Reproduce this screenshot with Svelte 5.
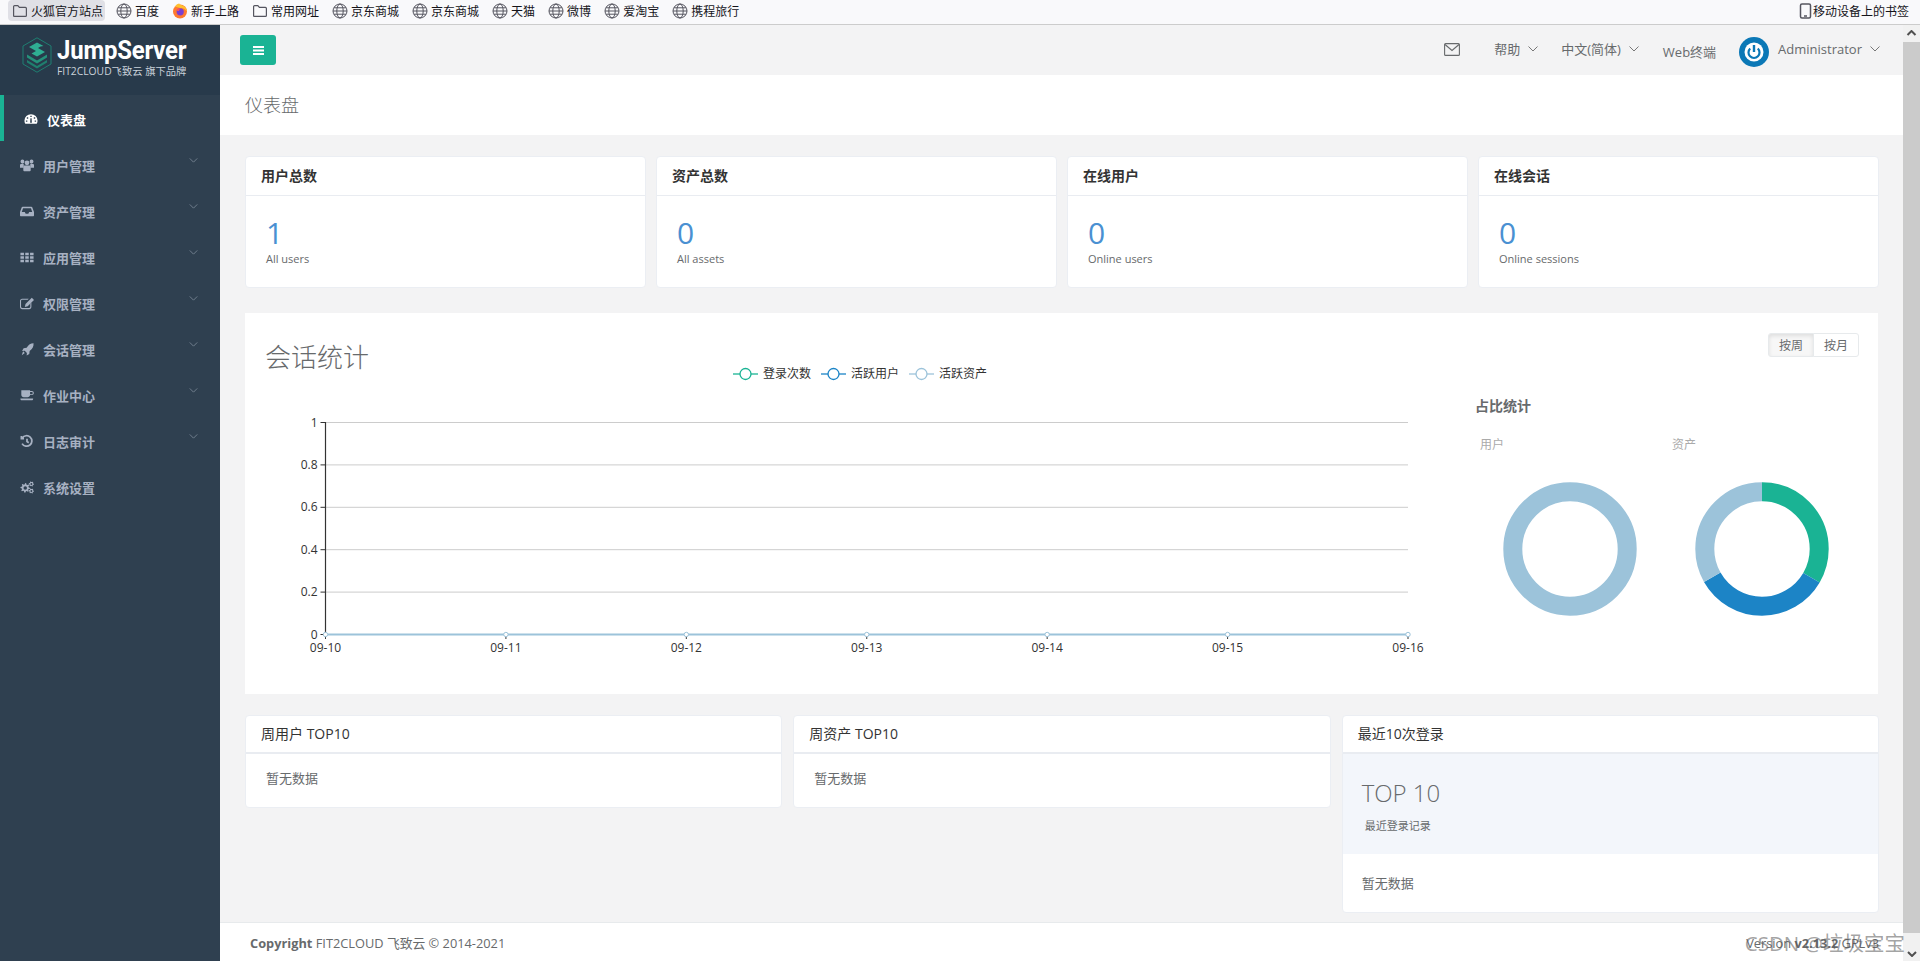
<script lang="ts">
	function gear(cx: number, cy: number, r: number, hole: number, teeth = 8) {
		let d = ''
		const step = (Math.PI * 2) / (teeth * 4)
		for (let i = 0; i < teeth * 4; i++) {
			const rad = i % 4 < 2 ? r : r * 0.72
			const x = cx + Math.cos(i * step) * rad
			const y = cy + Math.sin(i * step) * rad
			d += `${i ? 'L' : 'M'}${x.toFixed(2)} ${y.toFixed(2)}`
		}
		d += `zM${cx - hole} ${cy}a${hole} ${hole} 0 1 0 ${hole * 2} 0a${hole} ${hole} 0 1 0 ${-hole * 2} 0z`
		return d
	}

	const bookmarks = [
		{ icon: 'folder', label: '火狐官方站点', active: true },
		{ icon: 'globe', label: '百度' },
		{ icon: 'firefox', label: '新手上路' },
		{ icon: 'folder', label: '常用网址' },
		{ icon: 'globe', label: '京东商城' },
		{ icon: 'globe', label: '京东商城' },
		{ icon: 'globe', label: '天猫' },
		{ icon: 'globe', label: '微博' },
		{ icon: 'globe', label: '爱淘宝' },
		{ icon: 'globe', label: '携程旅行' }
	]

	const menu = [
		{
			label: '仪表盘',
			active: true,
			d: 'M8 2.5A7.5 7.5 0 0 0 .5 10c0 1.4.4 2.6 1 3.5h13c.6-.9 1-2.1 1-3.5A7.5 7.5 0 0 0 8 2.5zM7.2 4.2h1.6v1.6H7.2zM3.2 6h1.6v1.6H3.2zM11.2 6h1.6v1.6h-1.6zM2.2 9.6h1.6v1.6H2.2zM12.2 9.6h1.6v1.6h-1.6zM7 12.2l.3-5h1.4l.3 5z'
		},
		{
			label: '用户管理',
			arrow: true,
			d: 'M8 2.8a2.7 2.7 0 1 1 0 5.4 2.7 2.7 0 0 1 0-5.4zM2.8 1.800a2.2 2.2 0 1 1 0 4.400 2.2 2.2 0 0 1 0-4.400zM13.200 1.800a2.2 2.2 0 1 1 0 4.400 2.2 2.2 0 0 1 0-4.400zM0 7.500c.6-.6 1.600-.8 3-.8.6 0 1 .1 1.300.2l-.4 4.100H0zM16 7.500c-.6-.6-1.600-.8-3-.8-.6 0-1 .1-1.300.2l.4 4.100H16zM5 8.600h6c.8 0 1.200.6 1.200 1.400v4c0 .6-.4 1-1 1H4.800c-.6 0-1-.4-1-1v-4c0-.8.4-1.400 1.200-1.400z'
		},
		{
			label: '资产管理',
			arrow: true,
			d: 'M3 3h10c.5 0 .8.3 1 .7l2 5.3v3.8c0 .7-.5 1.2-1.2 1.2H1.2C.5 14 0 13.500 0 12.800V9l2-5.300c.2-.4.5-.7 1-.7zM3.500 4.800 2 9h3.500l1 2h3l1-2H14l-1.500-4.200z'
		},
		{
			label: '应用管理',
			arrow: true,
			d: 'M.5 3h4v3h-4zM6 3h4v3H6zM11.500 3h4v3h-4zM.5 7h4v3h-4zM6 7h4v3H6zM11.500 7h4v3h-4zM.5 11h4v3h-4zM6 11h4v3H6zM11.500 11h4v3h-4z'
		},
		{
			label: '权限管理',
			arrow: true,
			d: 'M2.500 3H10L8.800 4.200H2.500c-.7 0-1.300.6-1.300 1.300v6.800c0 .7.6 1.300 1.300 1.300h8c.7 0 1.300-.6 1.300-1.300V9l1.200-1.200v4.700c0 1.400-1.100 2.500-2.500 2.500h-8C1.100 15 0 13.900 0 12.500v-7C0 4.100 1.100 3 2.500 3zM13.500 2l2.500 2.500L8.800 11.700 5.500 12.500l.8-3.300z'
		},
		{
			label: '会话管理',
			arrow: true,
			d: 'M15.500 1.500c.2 3.500-1 6.500-4.500 8.800l-.4 3.500-3 1.700.3-3-2.500-2.500-3 .3L4.100 7l3.500-.4C9.900 3 12 1.700 15.500 1.500zM3.500 10.500l2 2L2 15z'
		},
		{
			label: '作业中心',
			arrow: true,
			d: 'M1.500 2.500h10v1h2c1.400 0 2.300 1 2.300 2.300s-.9 2.300-2.300 2.300h-2c-.3 1.500-1.300 2.400-2.800 2.400H4.300c-1.600 0-2.800-1.200-2.800-2.800zM11.500 4.700v2.300h2c.7 0 1.100-.5 1.100-1.200s-.4-1.100-1.100-1.100zM.5 12h14.500v.5c0 .8-.7 1.500-1.500 1.500H2c-.8 0-1.500-.7-1.500-1.500z'
		},
		{
			label: '日志审计',
			arrow: true,
			stroke: true,
			d: 'M2.600 4.600A6 6 0 1 1 2.400 11M1.600 2.400v3h3M8 5.500v3l2 1.400'
		},
		{
			label: '系统设置',
			d: gear(6, 9, 5.500, 2) + gear(13, 4.500, 3, 1.100, 6) + gear(13, 12.500, 3, 1.100, 6)
		}
	]

	const stats = [
		{ title: '用户总数', value: 1, note: 'All users' },
		{ title: '资产总数', value: 0, note: 'All assets' },
		{ title: '在线用户', value: 0, note: 'Online users' },
		{ title: '在线会话', value: 0, note: 'Online sessions' }
	]

	const legend = [
		{ label: '登录次数', color: '#1ab394' },
		{ label: '活跃用户', color: '#1c84c6' },
		{ label: '活跃资产', color: '#9cc3da' }
	]

	// chart coordinates are relative to the svg, whose origin sits under the panel header
	const left = 80.5
	const right = 1163
	const base = 234
	const yTicks = ['0', '0.2', '0.4', '0.6', '0.8', '1']
	const days = ['09-10', '09-11', '09-12', '09-13', '09-14', '09-15', '09-16']
	const rowH = 42.4
	const colW = (right - left) / 6

	const r = 57.200
	const circ = Math.PI * 2 * r
	const donuts = [
		{ label: '用户', parts: [{ color: '#9cc3da', share: 1 }] },
		{
			label: '资产',
			parts: [
				{ color: '#1ab394', share: 1 / 3 },
				{ color: '#1c84c6', share: 1 / 3 },
				{ color: '#9cc3da', share: 1 / 3 }
			]
		}
	]
</script>

{#snippet chevron()}
	<svg class="chevron" viewBox="0 0 10 6" width="10" height="6"><path d="M.5.5 5 5 9.500.5" /></svg>
{/snippet}

<div class="browser-bar">
	{#each bookmarks as item}
		<div class="bookmark" class:active={item.active}>
			{#if item.icon === 'folder'}
				<svg viewBox="0 0 16 16" width="16" height="16" fill="none" stroke="#55555f" stroke-width="1.200">
					<path d="M1.600 13.400V3.600c0-.6.400-1 1-1h3.200l1.600 1.800h6c.6 0 1 .4 1 1v7c0 .6-.4 1-1 1H2.600c-.6 0-1-.4-1-1z" />
				</svg>
			{:else if item.icon === 'globe'}
				<svg viewBox="0 0 16 16" width="16" height="16" fill="none" stroke="#55555f" stroke-width="1">
					<circle cx="8" cy="8" r="7" />
					<ellipse cx="8" cy="8" rx="3.200" ry="7" />
					<path d="M1 8h14M2 4.800h12M2 11.200h12" />
				</svg>
			{:else}
				<svg viewBox="0 0 16 16" width="16" height="16">
					<circle cx="8" cy="8.500" r="7" fill="#ff7a2e" />
					<path d="M3 3.500C4 1.500 6 .8 7.500.5 7 1.800 9.500 2 11.500 3c2 1.200 3.400 3.500 3.500 5.500-2-3-5-4-7-3.500z" fill="#ffc02e" />
					<circle cx="8.200" cy="8.800" r="3.600" fill="#7a3fd0" />
					<path d="M4.500 7c1-1.500 3-2 4.500-1.300C7.500 6 6.800 7 7.200 8 6 8.300 5 7.800 4.500 7z" fill="#ff4f5e" />
				</svg>
			{/if}
			<span>{item.label}</span>
		</div>
	{/each}
	<div class="mobile-bookmarks">
		<svg viewBox="0 0 13 16" width="13" height="16" fill="none" stroke="#55555f" stroke-width="1.500">
			<rect x="1.500" y="1" width="10" height="14" rx="1.500" />
			<path d="M5 13h3" />
		</svg>
		<span>移动设备上的书签</span>
	</div>
</div>

<div class="window">
	<aside class="sidebar">
		<div class="logo">
			<svg class="logo-mark" viewBox="0 0 30 36" width="30" height="36" fill="none">
				<path d="M15 .8 29 9v18l-14 8.200L1 27V9z" stroke="#1f7f72" stroke-width="1" />
				<path d="M21.500 9 15 5.500 7 10l7 4-4.500 2.500 5.500 3 8-4.500-7-4 2.500-1.500z" fill="#2fae93" />
				<path d="M5 17.500 15 23.500 25 17.500v3l-10 6-10-6z" fill="#25917b" />
				<path d="M5 23 15 29l10-6v2.500l-10 6-10-6z" fill="#1f7f6e" />
			</svg>
			<div class="logo-text">
				<div class="brand">JumpServer</div>
				<div class="tagline">FIT2CLOUD飞致云 旗下品牌</div>
			</div>
		</div>
		<nav>
			{#each menu as item}
				<div class="nav-item" class:active={item.active}>
					<svg
						class="nav-icon"
						class:stroked={item.stroke}
						viewBox="0 0 16 16"
						width="14"
						height="14"
					>
						<path d={item.d} fill-rule="evenodd" />
					</svg>
					<span>{item.label}</span>
					{#if item.arrow}
						<svg class="nav-arrow" viewBox="0 0 10 6" width="9" height="5"><path d="M.5.5 5 5 9.500.5" /></svg>
					{/if}
				</div>
			{/each}
		</nav>
	</aside>

	<main>
		<header class="topbar">
			<button class="menu-toggle" aria-label="menu">
				<svg viewBox="0 0 11 9" width="11" height="9"><path d="M0 0h11v2H0zM0 3.500h11v2H0zM0 7h11v2H0z" fill="#fff" /></svg>
			</button>
			<div class="top-links">
				<svg class="mail" viewBox="0 0 16 13" width="16" height="13" fill="none" stroke="#676a6c" stroke-width="1.100">
					<rect x=".6" y=".6" width="14.800" height="11.800" rx="1" />
					<path d="M1 1.500 8 7.500l7-6" />
				</svg>
				<span class="link help">帮助 {@render chevron()}</span>
				<span class="link lang">中文(简体) {@render chevron()}</span>
				<span class="link web">Web终端</span>
				<svg class="avatar" viewBox="0 0 30 30" width="30" height="30" fill="none">
					<circle cx="15" cy="15" r="15" fill="#0b78b6" />
					<circle cx="15" cy="15" r="9.500" fill="#fff" />
					<path d="M11.200 11.500a5.500 5.500 0 1 0 7.600 0" stroke="#0b78b6" stroke-width="2.200" />
					<path d="M15 8v7" stroke="#0b78b6" stroke-width="2.400" />
				</svg>
				<span class="link user">Administrator {@render chevron()}</span>
			</div>
		</header>

		<div class="page-heading">仪表盘</div>

		<div class="content">
			<section class="stats">
				{#each stats as stat}
					<div class="card">
						<h5>{stat.title}</h5>
						<div class="stat-body">
							<div class="stat-value">{stat.value}</div>
							<small>{stat.note}</small>
						</div>
					</div>
				{/each}
			</section>

			<section class="panel">
				<div class="panel-left">
					<div class="panel-head">
						<h2>会话统计</h2>
						<div class="legend">
							{#each legend as entry}
								<div class="legend-item">
									<svg viewBox="0 0 25 14" width="25" height="14" fill="none" stroke={entry.color}>
										<path d="M0 7h25" stroke-width="2" opacity="0.65" />
										<circle cx="12.500" cy="7" r="5.500" fill="#fff" stroke-width="1.300" />
									</svg>
									<span>{entry.label}</span>
								</div>
							{/each}
						</div>
					</div>
					<svg class="line-chart" viewBox="0 0 1195 294" width="1195" height="294">
						{#each yTicks as tick, i}
							{@const y = base - i * rowH + 0.500}
							{#if i > 0}
								<path d="M{left} {y}H{right}" stroke="#ccc" />
							{/if}
							<path d="M{left - 5} {y}H{left}" stroke="#333" />
							<text x={left - 8} y={y + 4} text-anchor="end">{tick}</text>
						{/each}
						<path d="M{left} {base - 5 * rowH}V{base}" stroke="#333" stroke-width="1.200" />
						{#each days as day, i}
							{@const x = left + i * colW}
							<path d="M{x} {base}v5" stroke="#333" />
							<text {x} y={base + 18} text-anchor="middle">{day}</text>
						{/each}
						<path d="M{left} {base + 0.500}H{right}" stroke="#9cc3da" stroke-width="2" />
						{#each days as day, i}
							<circle cx={left + i * colW} cy={base + 0.500} r="2.200" fill="#fff" stroke="#9cc3da" />
						{/each}
					</svg>
				</div>

				<div class="panel-right">
					<div class="switch">
						<button class="on">按周</button>
						<button>按月</button>
					</div>
					<h4>占比统计</h4>
					<div class="donuts">
						{#each donuts as donut}
							<div class="donut">
								<div class="donut-label">{donut.label}</div>
								<svg viewBox="0 0 140 140" width="140" height="140" fill="none">
									{#each donut.parts as part, i}
										<circle
											cx="70"
											cy="70"
											{r}
											stroke={part.color}
											stroke-width="19"
											stroke-dasharray="{part.share * circ} {circ}"
											stroke-dashoffset={-i * part.share * circ}
											transform="rotate(-90 70 70)"
										/>
									{/each}
								</svg>
							</div>
						{/each}
					</div>
				</div>
			</section>

			<section class="tops">
				<div class="card">
					<h5 class="plain">周用户 TOP10</h5>
					<div class="empty">暂无数据</div>
				</div>
				<div class="card">
					<h5 class="plain">周资产 TOP10</h5>
					<div class="empty">暂无数据</div>
				</div>
				<div class="card">
					<h5 class="plain">最近10次登录</h5>
					<div class="top-banner">
						<div class="top-title">TOP 10</div>
						<small>最近登录记录</small>
					</div>
					<div class="empty wide">暂无数据</div>
				</div>
			</section>
		</div>

		<footer>
			<div><strong>Copyright</strong> FIT2CLOUD 飞致云 © 2014-2021</div>
			<div>Version <strong>v2.13.2</strong> GPLv3</div>
		</footer>
	</main>

	<div class="scrollbar">
		<svg class="scroll-up" viewBox="0 0 10 6" width="10" height="6"><path d="M1 5 5 1l4 4" /></svg>
		<div class="thumb"></div>
		<div class="scroll-end">
			<svg viewBox="0 0 10 6" width="10" height="6"><path d="M1 1l4 4 4-4" /></svg>
		</div>
	</div>

	<div class="watermark">CSDN @垃圾宝宝</div>
</div>

<style>
	:global(*) {
		box-sizing: border-box;
	}

	:global(body) {
		background: #f3f3f4;
		overflow: hidden;
	}

	:global(#app) {
		color: #676a6c;
		font-family: 'Open Sans', 'Noto Sans CJK SC', sans-serif;
		font-size: 13px;
	}

	.browser-bar {
		align-items: center;
		background: #f9f9fb;
		border-bottom: 1px solid #ccc;
		color: #15141a;
		display: flex;
		font-size: 12px;
		height: 25px;
		padding: 0 0 3px 8px;
	}

	.bookmark {
		align-items: center;
		border-radius: 4px;
		display: flex;
		gap: 3px;
		height: 21px;
		margin-right: 7px;
		padding: 0 2px 0 4px;
	}

	.bookmark.active {
		background: #e0e0e6;
	}

	.mobile-bookmarks {
		align-items: center;
		display: flex;
		gap: 1px;
		margin-left: auto;
		margin-right: 11px;
	}

	.window {
		display: flex;
		height: 936px;
		position: relative;
	}

	.sidebar {
		background: #2f4050;
		flex: none;
		width: 220px;
	}

	.logo {
		align-items: flex-start;
		background: #283a4b;
		display: flex;
		gap: 5px;
		height: 70px;
		padding: 12px 0 0 22px;
	}

	.logo-text {
		color: #fff;
	}

	.brand {
		font-family: Roboto, sans-serif;
		font-size: 26px;
		font-weight: 700;
		letter-spacing: -0.2px;
		line-height: 26px;
		transform: scaleX(0.92);
		transform-origin: left;
	}

	.tagline {
		color: #c9d1d9;
		font-size: 10.3px;
		line-height: 14px;
		margin-top: 1px;
		white-space: nowrap;
	}

	.nav-item {
		align-items: center;
		color: #a7b1c2;
		display: flex;
		font-weight: 600;
		height: 46px;
		padding: 2px 0 0 20px;
		position: relative;
	}

	.nav-item.active {
		background: #2f4050;
		border-left: 4px solid #1ab394;
		color: #fff;
	}

	.nav-icon {
		fill: currentColor;
		flex: none;
		margin-right: 9px;
	}

	.nav-icon.stroked {
		fill: none;
		stroke: currentColor;
		stroke-width: 2;
	}

	.nav-arrow {
		fill: none;
		margin-left: auto;
		margin-right: 22px;
		margin-top: -10px;
		stroke: #7d8a99;
	}

	main {
		display: flex;
		flex: 1;
		flex-direction: column;
		min-width: 0;
	}

	.topbar {
		align-items: center;
		display: flex;
		flex: none;
		height: 50px;
		padding: 0 23px 0 20px;
	}

	.menu-toggle {
		align-items: center;
		background: #1ab394;
		border: 0;
		border-radius: 3px;
		display: flex;
		height: 30px;
		justify-content: center;
		padding: 0;
		width: 36px;
	}

	.top-links {
		align-items: center;
		display: flex;
		margin-left: auto;
	}

	.link {
		align-items: center;
		display: flex;
		gap: 6px;
		line-height: 18px;
		margin-top: -2px;
		white-space: nowrap;
	}

	.chevron {
		fill: none;
		margin-left: 2px;
		stroke: #777;
	}

	.mail {
		margin-right: 34px;
		margin-top: -2px;
	}

	.help {
		margin-right: 23px;
	}

	.lang {
		margin-right: 24px;
	}

	.web {
		margin-right: 23px;
		margin-top: 3px;
	}

	.avatar {
		margin-right: 9px;
		margin-top: 4px;
	}

	.page-heading {
		background: #fff;
		flex: none;
		font-size: 18px;
		font-weight: 300;
		height: 60px;
		line-height: 60px;
		padding-left: 25px;
	}

	.content {
		padding: 21px 24px 0 25px;
	}

	.stats {
		display: grid;
		gap: 10px;
		grid-template-columns: repeat(4, 1fr);
	}

	.card {
		background: #fff;
		border: 1px solid #ebeef3;
		border-radius: 4px;
	}

	.stats .card {
		height: 132px;
	}

	h5 {
		border-bottom: 1px solid #e9ecf1;
		color: #333;
		font-size: 14px;
		font-weight: 700;
		height: 39px;
		line-height: 37px;
		margin: 0;
		padding-left: 15px;
	}

	h5.plain {
		border-bottom-width: 2px;
		font-weight: 400;
		height: 38px;
		line-height: 36px;
	}

	.stat-body {
		padding: 20px 20px 0;
	}

	.stat-value {
		color: #4a90d2;
		font-size: 30px;
		font-weight: 400;
		line-height: 33px;
	}

	small {
		display: block;
		font-size: 11px;
		line-height: 16px;
	}

	.stat-body small {
		margin-top: 2px;
	}

	.panel {
		background: #fff;
		display: flex;
		height: 381px;
		margin: 25px 1px 0 0;
	}

	.panel-left {
		flex: none;
		width: 1195px;
	}

	.panel-head {
		display: flex;
		height: 87px;
		padding: 27px 0 0 20px;
	}

	h2 {
		font-size: 26px;
		font-weight: 300;
		line-height: 34px;
		margin: 0;
		width: 104px;
	}

	.legend {
		color: #333;
		display: flex;
		font-size: 12px;
		gap: 10px;
		height: 16px;
		line-height: 16px;
		margin: 26px 0 0 364px;
	}

	.legend-item {
		align-items: center;
		display: flex;
		gap: 5px;
	}

	.line-chart {
		display: block;
	}

	.line-chart text {
		fill: #333;
		font-size: 12px;
	}

	.panel-right {
		flex: 1;
		padding: 20px 23px 0 35px;
	}

	.switch {
		display: flex;
		justify-content: flex-end;
	}

	.switch button {
		background: #fff;
		border: 1px solid #e7eaec;
		color: #676a6c;
		font: inherit;
		font-size: 12px;
		height: 24px;
		margin-left: -1px;
		padding: 0;
		width: 46px;
	}

	.switch button:first-child {
		border-radius: 3px 0 0 3px;
	}

	.switch button:last-child {
		border-radius: 0 3px 3px 0;
	}

	.switch .on {
		background: #f7f7f7;
		box-shadow: inset 0 2px 4px rgba(0, 0, 0, 0.1);
	}

	h4 {
		font-size: 14px;
		font-weight: 700;
		line-height: 20px;
		margin: 39px 0 0;
	}

	.donuts {
		display: flex;
		margin-top: 21px;
	}

	.donut {
		width: 192px;
	}

	.donut-label {
		color: #aaa;
		font-size: 12px;
		line-height: 16px;
		padding-left: 5px;
	}

	.donut svg {
		display: block;
		margin: 26px 0 0 25px;
	}

	.tops {
		align-items: start;
		display: grid;
		gap: 11px;
		grid-template-columns: repeat(3, 1fr);
		margin-top: 21px;
	}

	.empty {
		line-height: 18px;
		padding: 15px 20px 20px;
	}

	.empty.wide {
		padding: 20px 19px 20px;
	}

	.top-banner {
		background: #f3f6fb;
		height: 100px;
		padding: 23px 19px 0;
	}

	.top-title {
		font-size: 24px;
		font-weight: 300;
		line-height: 32px;
	}

	.top-banner small {
		line-height: 16px;
		margin: 9px 0 0 3px;
	}

	footer {
		background: #fff;
		border-top: 1px solid #e7eaec;
		display: flex;
		flex: none;
		font-size: 12.8px;
		height: 39px;
		justify-content: space-between;
		line-height: 41px;
		margin-top: auto;
		padding: 0 24px 0 30px;
	}

	.scrollbar {
		background: #f1f1f1;
		display: flex;
		flex: none;
		flex-direction: column;
		width: 17px;
	}

	.scrollbar svg {
		fill: none;
		stroke: #505050;
		stroke-width: 2;
	}

	.scroll-up {
		flex: none;
		height: 17px;
		padding: 5px 3px 6px;
		width: 17px;
	}

	.thumb {
		background: #cbcbcb;
		flex: 1;
	}

	.scroll-end {
		align-items: flex-end;
		display: flex;
		flex: none;
		height: 28px;
		justify-content: center;
		padding-bottom: 4px;
	}

	.watermark {
		bottom: 6px;
		color: rgba(85, 85, 85, 0.55);
		font-size: 20.5px;
		line-height: 24px;
		pointer-events: none;
		position: absolute;
		right: 15px;
		white-space: nowrap;
	}
</style>
